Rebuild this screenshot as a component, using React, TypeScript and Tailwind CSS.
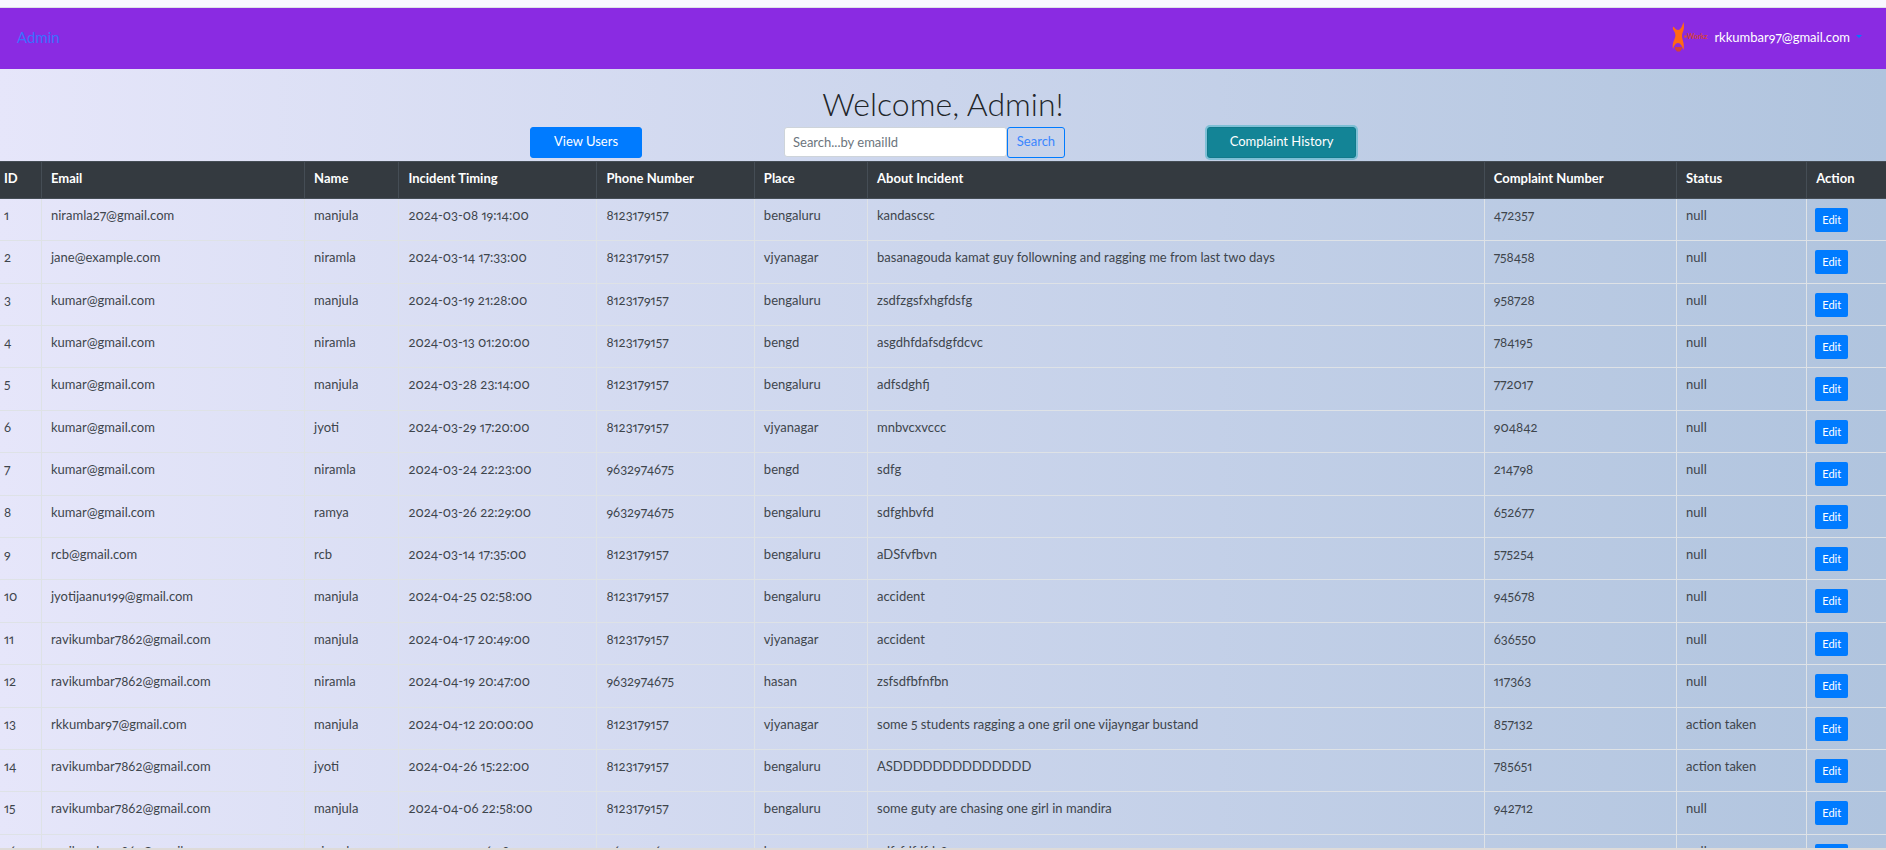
import React from "react";

type Row = [string, string, string, string, string, string, string, string];

const rows: Row[] = [
  ["niramla27@gmail.com", "manjula", "2024-03-08 19:14:00", "8123179157", "bengaluru", "kandascsc", "472357", "null"],
  ["jane@example.com", "niramla", "2024-03-14 17:33:00", "8123179157", "vjyanagar", "basanagouda kamat guy followning and ragging me from last two days", "758458", "null"],
  ["kumar@gmail.com", "manjula", "2024-03-19 21:28:00", "8123179157", "bengaluru", "zsdfzgsfxhgfdsfg", "958728", "null"],
  ["kumar@gmail.com", "niramla", "2024-03-13 01:20:00", "8123179157", "bengd", "asgdhfdafsdgfdcvc", "784195", "null"],
  ["kumar@gmail.com", "manjula", "2024-03-28 23:14:00", "8123179157", "bengaluru", "adfsdghfj", "772017", "null"],
  ["kumar@gmail.com", "jyoti", "2024-03-29 17:20:00", "8123179157", "vjyanagar", "mnbvcxvccc", "904842", "null"],
  ["kumar@gmail.com", "niramla", "2024-03-24 22:23:00", "9632974675", "bengd", "sdfg", "214798", "null"],
  ["kumar@gmail.com", "ramya", "2024-03-26 22:29:00", "9632974675", "bengaluru", "sdfghbvfd", "652677", "null"],
  ["rcb@gmail.com", "rcb", "2024-03-14 17:35:00", "8123179157", "bengaluru", "aDSfvfbvn", "575254", "null"],
  ["jyotijaanu199@gmail.com", "manjula", "2024-04-25 02:58:00", "8123179157", "bengaluru", "accident", "945678", "null"],
  ["ravikumbar7862@gmail.com", "manjula", "2024-04-17 20:49:00", "8123179157", "vjyanagar", "accident", "636550", "null"],
  ["ravikumbar7862@gmail.com", "niramla", "2024-04-19 20:47:00", "9632974675", "hasan", "zsfsdfbfnfbn", "117363", "null"],
  ["rkkumbar97@gmail.com", "manjula", "2024-04-12 20:00:00", "8123179157", "vjyanagar", "some 5 students ragging a one gril one vijayngar bustand", "857132", "action taken"],
  ["ravikumbar7862@gmail.com", "jyoti", "2024-04-26 15:22:00", "8123179157", "bengaluru", "ASDDDDDDDDDDDDDD", "785651", "action taken"],
  ["ravikumbar7862@gmail.com", "manjula", "2024-04-06 22:58:00", "8123179157", "bengaluru", "some guty are chasing one girl in mandira", "942712", "null"],
  ["ravikumbar7862@gmail.com", "niramla", "2024-04-25 16:38:00", "9632974675", "hasan", "sdfsfdfdfds8", "942713", "null"],
];

const columns: { label: string; width: string }[] = [
  { label: "ID", width: "w-[2.2%] pl-1" },
  { label: "Email", width: "w-[13.95%] pl-[9px]" },
  { label: "Name", width: "w-[5%] pl-[9px]" },
  { label: "Incident Timing", width: "w-[10.5%] pl-[9px]" },
  { label: "Phone Number", width: "w-[8.35%] pl-[9px]" },
  { label: "Place", width: "w-[6%] pl-[9px]" },
  { label: "About Incident", width: "w-[32.7%] pl-[9px]" },
  { label: "Complaint Number", width: "w-[10.2%] pl-[9px]" },
  { label: "Status", width: "w-[6.9%] pl-[9px]" },
  { label: "Action", width: "w-[4.2%] pl-[9px]" },
];

function Logo() {
  return (
    <svg viewBox="0 0 36 32" className="h-8 w-9 overflow-visible" aria-hidden="true">
      <path
        fill="#ff6a13"
        d="M1 6 C2 5 3 9 6 9 C9 9 10.500 4 11.500 1 C12.500 5 12 9 10.500 12 C9.500 14 10 17 11 20 C12 23 12 26 11.500 29 C10 25 8.500 22 6 22 C3.500 22 2 25 1 28 C0 25 1 21 2.500 18 C4 15 3.500 12 2 10 C1 8.500 0.500 7.500 1 6Z"
      />
      <circle cx="13.500" cy="15.500" r="1.300" fill="#e2502c" />
      <text x="15" y="18" fontSize="7" fontWeight="700" fill="#d3413a">
        Workz
      </text>
      <path fill="#d3413a" d="M3 26h7v2l-2 2.500H5L3 28z" />
    </svg>
  );
}

const action = "h-[31px] cursor-pointer rounded-[3px] border pb-1";

export default function App() {
  return (
    <div className="flex h-screen flex-col overflow-hidden border-b-2 border-[#dedbd9] bg-linear-to-r from-[#e6e6fa] to-[#b0c4de] font-['Lato','Open_Sans',sans-serif] text-[13px] leading-5 text-[#3e454c] oldstyle-nums proportional-nums">
      <div className="h-2 shrink-0 border-b border-[#dee2e6] bg-[#f8f9ff]" />
      <header className="flex h-[61px] shrink-0 items-center justify-between bg-[#8a2be2] pr-6 pb-1 pl-[17px]">
        <a href="#admin" className="text-[15px] text-[#3a70ff]">Admin</a>
        <button type="button" className="flex cursor-pointer items-center gap-1.5 text-white">
          <Logo />
          <span>rkkumbar97@gmail.com</span>
          <span className="border-x-[3px] border-t-[3px] border-x-transparent border-t-[#007bff]" />
        </button>
      </header>

      <main>
        <h1 className="h-[58px] pt-[15px] text-center text-[32px] leading-10 font-light text-[#212529]">Welcome, Admin!</h1>
        <div className="mx-auto flex h-[34px] max-w-[1140px] items-start justify-evenly px-[15px]">
          <button type="button" className={`${action} w-28 border-[#007bff] bg-[#007bff] text-white`}>View Users</button>
          <form className="flex items-start" onSubmit={(e) => e.preventDefault()}>
            <input
              type="search"
              aria-label="Search by email id"
              placeholder="Search...by emailId"
              className="h-[30px] w-[223px] rounded-[3px] border border-[#ced4da] bg-white px-2 placeholder:text-[#6c757d]"
            />
            <button type="submit" className={`${action} w-[58px] border-[#007bff] text-[#3a86ff]`}>Search</button>
          </form>
          <button
            type="button"
            className={`${action} w-[149px] border-[#117a8b] bg-[#138496] text-white ring-2 ring-[#3ab0c3]/50`}
          >
            Complaint History
          </button>
        </div>
        <table className="w-full table-fixed border-collapse">
          <thead className="bg-[#343a40] text-white">
            <tr className="h-[37px]">
              {columns.map((c) => (
                <th
                  key={c.label}
                  scope="col"
                  className={`border border-[#454d55] pb-1 text-left font-bold first:border-l-0 last:border-r-0 ${c.width}`}
                >
                  {c.label}
                </th>
              ))}
            </tr>
          </thead>
          <tbody>
            {rows.map((row, i) => (
              <tr key={i} className="h-[42px] align-top nth-[5n+2]:h-[43px] nth-[5n+5]:h-[43px]">
                <td className="border border-l-0 border-[#dee2e6] pt-1.5 pl-1">{i + 1}</td>
                {row.map((cell, j) => (
                  <td key={j} className="border border-[#dee2e6] pt-1.5 pl-[9px]">{cell}</td>
                ))}
                <td className="border border-r-0 border-[#dee2e6] pt-[9px] pl-2">
                  <button
                    type="button"
                    className="block h-6 w-[33px] cursor-pointer rounded-xs bg-[#007bff] text-[11px] text-white"
                  >
                    Edit
                  </button>
                </td>
              </tr>
            ))}
          </tbody>
        </table>
      </main>
    </div>
  );
}
